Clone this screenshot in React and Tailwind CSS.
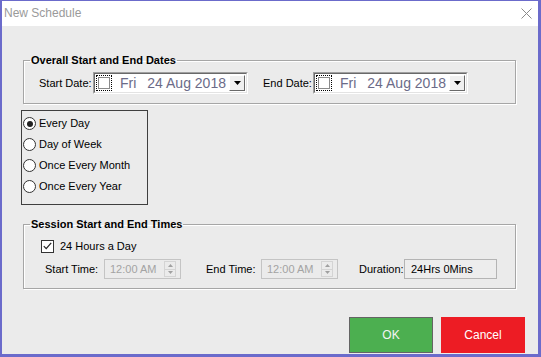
import React, { useState } from "react";

function DateBox({ label, labelWidth }) {
  return (
    <div className="flex items-center">
      <span className="block" style={{ width: labelWidth }}>
        {label}
      </span>
      <div className="flex items-center w-[155px] h-[22px] bg-white border border-t-[#a0a0a0] border-l-[#a0a0a0] border-b-white border-r-white">
        <div className="flex items-center h-full flex-1 border border-t-[#696969] border-l-[#696969] border-b-[#e3e3e3] border-r-[#e3e3e3]">
          <div className="ml-[1px] w-[16px] h-[16px] border border-dotted border-black flex items-center justify-center">
            <div className="w-[12px] h-[12px] border border-[#8a8a8a] bg-white" />
          </div>
          <span className="ml-[8px] text-[14px] text-[#6b6b88] leading-none">Fri</span>
          <span className="ml-[11px] text-[14px] text-[#6b6b88] leading-none">24 Aug 2018</span>
          <div className="ml-auto mr-[1px] w-[16px] h-[16px] bg-[#f0f0f0] border border-t-white border-l-white border-b-[#696969] border-r-[#696969] flex items-center justify-center">
            <svg width="7" height="4" viewBox="0 0 7 4">
              <path d="M0 0h7L3.5 4z" fill="#000" />
            </svg>
          </div>
        </div>
      </div>
    </div>
  );
}

function Radio({ label, checked, onClick }) {
  return (
    <div className="flex items-center h-[21px] cursor-default" onClick={onClick}>
      <div className="ml-[1px] w-[13px] h-[13px] rounded-full border border-[#333] bg-white flex items-center justify-center">
        {checked && <div className="w-[6px] h-[6px] rounded-full bg-[#222]" />}
      </div>
      <span className="ml-[3px]">{label}</span>
    </div>
  );
}

function TimeBox({ value }) {
  return (
    <div className="flex items-center w-[77px] h-[20px] border border-[#c4c4c4] bg-[#ebebeb]">
      <span className="ml-[5px] text-[#a3a3a3]">{value}</span>
      <div className="ml-auto mr-[4px] w-[12px] h-[16px] flex flex-col border border-[#d4d4d4]">
        <div className="flex-1 flex items-center justify-center border-b border-[#d4d4d4]">
          <svg width="5" height="3" viewBox="0 0 5 3">
            <path d="M0 3h5L2.5 0z" fill="#a0a0a0" />
          </svg>
        </div>
        <div className="flex-1 flex items-center justify-center">
          <svg width="5" height="3" viewBox="0 0 5 3">
            <path d="M0 0h5L2.5 3z" fill="#a0a0a0" />
          </svg>
        </div>
      </div>
    </div>
  );
}

export default function App() {
  const [mode, setMode] = useState("Every Day");
  const [allDay, setAllDay] = useState(true);
  const modes = ["Every Day", "Day of Week", "Once Every Month", "Once Every Year"];

  return (
    <div className="w-[541px] h-[357px] flex flex-col border-t border-l-2 border-r-[3px] border-b-[3px] border-[#6b6bcb] font-['Liberation_Sans',Arial,sans-serif] text-[11px] text-black leading-[13px] overflow-hidden">
      {/* title bar */}
      <div className="h-[25px] bg-white flex items-center justify-between shrink-0">
        <span className="ml-[2px] text-[12px] text-[#9a9a9a]">New Schedule</span>
        <svg className="mr-[6px]" width="11" height="11" viewBox="0 0 11 11">
          <path d="M0.5 0.5l10 10M10.5 0.5l-10 10" stroke="#8a8a8a" strokeWidth="1" />
        </svg>
      </div>

      <div className="flex-1 bg-[#ebebeb] flex flex-col">
        <fieldset className="ml-[21px] mt-[28px] w-[493px] border border-[#a6a6a6] pt-[5px] pb-[9px] shadow-[inset_1px_1px_0_#fff,1px_1px_0_#fff]">
          <legend className="ml-[6px] px-[1px] font-bold leading-[13px]">Overall Start and End Dates</legend>
          <div className="flex items-center ml-[15px]">
            <DateBox label="Start Date:" labelWidth={54} />
            <div className="ml-[15px]">
              <DateBox label="End Date:" labelWidth={50} />
            </div>
          </div>
        </fieldset>

        <div className="ml-[19px] mt-[6px] w-[127px] h-[95px] border border-[#3f3f3f] pt-[2px]">
          {modes.map((m) => (
            <Radio key={m} label={m} checked={mode === m} onClick={() => setMode(m)} />
          ))}
        </div>

        <fieldset className="ml-[21px] mt-[13px] w-[493px] border border-[#a6a6a6] pt-[8px] pb-[9px] shadow-[inset_1px_1px_0_#fff,1px_1px_0_#fff]">
          <legend className="ml-[6px] px-[1px] font-bold leading-[13px]">Session Start and End Times</legend>
          <div className="flex items-center h-[14px] ml-[17px]" onClick={() => setAllDay(!allDay)}>
            <div className="w-[13px] h-[13px] border border-[#333] bg-white flex items-center justify-center">
              {allDay && (
                <svg width="9" height="8" viewBox="0 0 9 8">
                  <path d="M0.8 4.2l2.4 2.5L8.2 0.8" stroke="#222" strokeWidth="1.2" fill="none" />
                </svg>
              )}
            </div>
            <span className="ml-[6px]">24 Hours a Day</span>
          </div>
          <div className="flex items-center mt-[6px] ml-[21px]">
            <span className="w-[59px]">Start Time:</span>
            <TimeBox value="12:00 AM" />
            <span className="ml-[25px] w-[55px]">End Time:</span>
            <TimeBox value="12:00 AM" />
            <span className="ml-[21px] w-[45px]">Duration:</span>
            <div className="w-[93px] h-[20px] border border-[#b4b4b4] bg-[#ededed] flex items-center">
              <span className="ml-[6px]">24Hrs 0Mins</span>
            </div>
          </div>
        </fieldset>

        <div className="flex justify-end gap-[8px] mt-[28px] mr-[13px]">
          <button className="w-[84px] h-[36px] bg-[#4caf50] border border-[#646464] text-[12px] text-[#f4f4f4]">
            OK
          </button>
          <button className="w-[84px] h-[36px] bg-[#ed1c24] text-[12px] text-white">Cancel</button>
        </div>
      </div>
    </div>
  );
}
